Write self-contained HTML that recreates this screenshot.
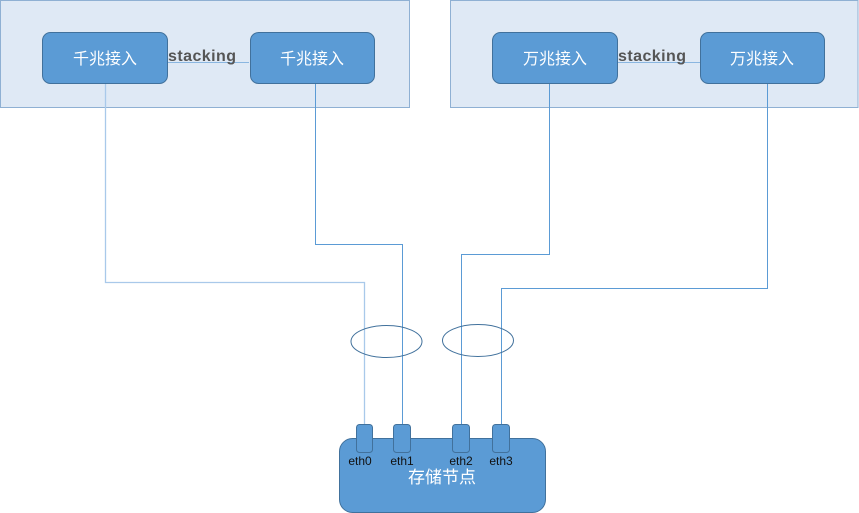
<!DOCTYPE html>
<html><head><meta charset="utf-8"><style>
html,body{margin:0;padding:0;background:#fff;width:859px;height:513px;overflow:hidden}
svg{display:block}
text{font-family:"Liberation Sans","Noto Sans CJK SC",sans-serif}
</style></head><body>
<svg width="859" height="513" viewBox="0 0 859 513" xmlns="http://www.w3.org/2000/svg">
<rect x="0.5" y="0.5" width="409" height="107" fill="#dfe9f5" stroke="#8fb0d3"/>
<rect x="450.5" y="0.5" width="407.5" height="107" fill="#dfe9f5" stroke="#8fb0d3"/>
<g fill="none" stroke="#5b9bd5" stroke-width="1">
<line x1="167" y1="62.5" x2="249" y2="62.5" stroke="#8ab6e0"/>
<line x1="617" y1="62.5" x2="700" y2="62.5" stroke="#8ab6e0"/>
<polyline points="105.5,83 105.5,282.5 364.5,282.5 364.5,425" stroke="#a9c9ea" stroke-width="1.3"/>
<polyline points="315.5,83 315.5,244.5 402.5,244.5 402.5,425"/>
<polyline points="549.5,83 549.5,254.5 461.5,254.5 461.5,425"/>
<polyline points="767.5,83 767.5,288.5 501.5,288.5 501.5,425"/>
</g>
<g fill="#5b9bd5" stroke="#41719c">
<rect x="42.5" y="32.5" width="125" height="51" rx="8"/>
<rect x="250.5" y="32.5" width="124" height="51" rx="8"/>
<rect x="492.5" y="32.5" width="125" height="51" rx="8"/>
<rect x="700.5" y="32.5" width="124" height="51" rx="8"/>
</g>
<g fill="#fff" font-size="16" text-anchor="middle">
<text x="105" y="64">千兆接入</text>
<text x="312" y="64">千兆接入</text>
<text x="555" y="64">万兆接入</text>
<text x="762" y="64">万兆接入</text>
</g>
<g fill="#555" font-size="16" font-weight="bold">
<text x="168" y="61" textLength="68">stacking</text>
<text x="618" y="61" textLength="68">stacking</text>
</g>
<g fill="none" stroke="#41719c">
<ellipse cx="386.5" cy="341.5" rx="35.5" ry="16"/>
<ellipse cx="478" cy="340.5" rx="35.5" ry="16"/>
</g>
<rect x="339.5" y="438.5" width="206" height="74" rx="13" fill="#5b9bd5" stroke="#41719c"/>
<g fill="#5b9bd5" stroke="#41719c">
<rect x="356.5" y="424.5" width="16" height="28" rx="3"/>
<rect x="393.5" y="424.5" width="17" height="28" rx="3"/>
<rect x="452.5" y="424.5" width="17" height="28" rx="3"/>
<rect x="492.5" y="424.5" width="17" height="28" rx="3"/>
</g>
<g fill="#111" font-size="12" text-anchor="middle">
<text x="360" y="465">eth0</text>
<text x="402" y="465">eth1</text>
<text x="461" y="465">eth2</text>
<text x="501" y="465">eth3</text>
</g>
<text x="442" y="483" fill="#fff" font-size="17" text-anchor="middle">存储节点</text>
</svg>
</body></html>
